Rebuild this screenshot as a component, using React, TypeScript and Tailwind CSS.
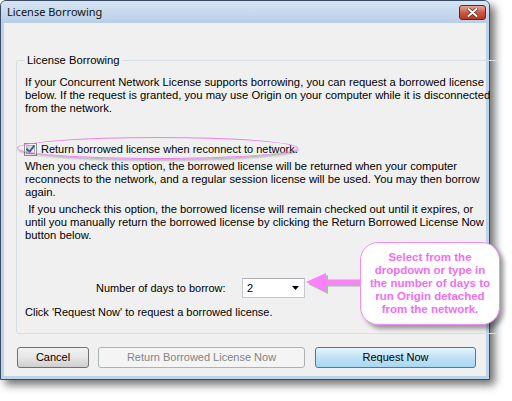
import React from 'react';

const ui = "font-['Liberation_Sans',Arial,sans-serif]";

const CheckBox: React.FC = () => (
  <svg width="13" height="13" viewBox="0 0 13 13" className="shrink-0">
    <defs>
      <linearGradient id="cbg" x1="0" y1="0" x2="1" y2="1">
        <stop offset="0" stopColor="#c9cdd4" />
        <stop offset="1" stopColor="#f7f7f7" />
      </linearGradient>
    </defs>
    <rect x="0.5" y="0.5" width="12" height="12" fill="#f4f4f4" stroke="#8e8f8f" />
    <rect x="2.5" y="2.5" width="8" height="8" fill="url(#cbg)" stroke="#aeb3b9" />
    <path d="M3.2 6.4 L5.4 8.8 L9.8 3.4" fill="none" stroke="#3d5590" strokeWidth="1.9" strokeLinecap="square" />
  </svg>
);

const App: React.FC = () => {
  return (
    <div className={`relative w-[512px] h-[401px] bg-white overflow-hidden ${ui} text-[11px] leading-[13px] text-black`}>
      {/* dialog window */}
      <div className="w-[490px] h-[380px] flex flex-col border border-[#3a4c63] rounded-t-[6px] bg-[#bcd3ec] shadow-[5px_5px_8px_rgba(0,0,0,0.55)]">
        <div className="h-[22px] flex items-center justify-between pl-[6px] pr-[3px] rounded-t-[5px] bg-gradient-to-b from-[#d7e5f4] to-[#b8cee7]">
          <span className="font-['Noto_Sans',sans-serif] text-[11px] leading-[16px] text-[#111]">License Borrowing</span>
          <div className="w-[27px] h-[15px] flex items-center justify-center rounded-[3px] border border-[#6b2419] bg-gradient-to-b from-[#e5a597] via-[#cc5b45] to-[#b8351f]">
            <svg width="11" height="9" viewBox="0 0 11 9">
              <path d="M1.5 1 L9.5 8 M9.5 1 L1.5 8" stroke="#5a2a22" strokeWidth="3.4" strokeLinecap="round" />
              <path d="M1.5 1 L9.5 8 M9.5 1 L1.5 8" stroke="#ffffff" strokeWidth="2" strokeLinecap="round" />
            </svg>
          </div>
        </div>

        <div className="flex-1 mx-[3px] mb-[3px] bg-[#f0f0f0] flex flex-col">
          <fieldset className="ml-[12px] mt-[31px] w-[462px] border border-[#d5dfe5] rounded-[3px] p-0">
            <legend className="ml-[7px] px-[3px] text-[11.25px]">License Borrowing</legend>
            <div className="px-[8px] pt-[9px] pb-[14px]">
              <p className="whitespace-nowrap text-[11.25px]">
                If your Concurrent Network License supports borrowing, you can request a borrowed license<br />
                below. If the request is granted, you may use Origin on your computer while it is disconnected<br />
                from the network.
              </p>
              <div className="mt-[27px] h-[14px] flex items-center gap-[4px] -ml-[1px]">
                <CheckBox />
                <span>Return borrowed license when reconnect to network.</span>
              </div>
              <p className="mt-[4px] whitespace-nowrap text-[11.25px]">
                When you check this option, the borrowed license will be returned when your computer<br />
                reconnects to the network, and a regular session license will be used. You may then borrow<br />
                again.
              </p>
              <p className="mt-[4px] whitespace-nowrap text-[11.25px]">
                &nbsp;If you uncheck this option, the borrowed license will remain checked out until it expires, or<br />
                until you manually return the borrowed license by clicking the Return Borrowed License Now<br />
                button below.
              </p>
              <div className="mt-[36px] flex items-center ml-[71px]">
                <span className="w-[146px]">Number of days to borrow:</span>
                <div className="w-[63px] h-[20px] flex items-center justify-between pl-[4px] pr-[5px] bg-white border border-[#c5c7cc] border-t-[#abadb3]">
                  <span>2</span>
                  <svg width="7" height="4" viewBox="0 0 7 4">
                    <path d="M0 0 L7 0 L3.5 4 Z" fill="#000" />
                  </svg>
                </div>
              </div>
              <p className="mt-[8px]">Click 'Request Now' to request a borrowed license.</p>
            </div>
          </fieldset>

          <div className="mt-[13px] ml-[13px] flex gap-[9px]">
            <button className="w-[72px] h-[21px] rounded-[3px] border border-[#707070] bg-gradient-to-b from-[#f2f2f2] via-[#e6e6e6] to-[#cfcfcf]">
              Cancel
            </button>
            <button className="w-[207px] h-[21px] rounded-[3px] border border-[#adb2b5] bg-[#f4f4f4] text-[#838383]">
              Return Borrowed License Now
            </button>
            <button className="ml-[1px] w-[161px] h-[21px] rounded-[3px] border border-[#3c7fb1] bg-gradient-to-b from-[#e8f5fc] via-[#bfe2f6] to-[#a7d8f3]">
              Request Now
            </button>
          </div>
        </div>
      </div>

      {/* annotation: ellipse around checkbox */}
      <div className="absolute left-[17px] top-[137px] w-[281px] h-[22px] rounded-[50%] border border-[#f27ef2] shadow-[1px_2px_2px_rgba(0,0,0,0.22)]" />

      {/* annotation: arrow */}
      <svg className="absolute left-[304px] top-[270px]" width="62" height="28" viewBox="0 0 62 28">
        <path d="M2 12 L22 3 L22 9.5 L58 9.5 L58 14.5 L22 14.5 L22 22 Z" fill="#000" opacity="0.25" transform="translate(2 2)" />
        <path d="M2 12 L22 3 L22 9.5 L58 9.5 L58 14.5 L22 14.5 L22 22 Z" fill="#ff80ff" />
      </svg>

      {/* annotation: callout */}
      <div className="absolute left-[360px] top-[242px] w-[140px] h-[83px] flex items-center justify-center rounded-[18px] border border-[#f48cf4] bg-white shadow-[4px_4px_4px_rgba(0,0,0,0.35)]">
        <p className="text-center font-bold text-[11.5px] text-[#f46ef4] leading-[13px]">
          Select from the<br />
          dropdown or type in<br />
          the number of days to<br />
          run Origin detached<br />
          from the network.
        </p>
      </div>
    </div>
  );
};

export default App;
